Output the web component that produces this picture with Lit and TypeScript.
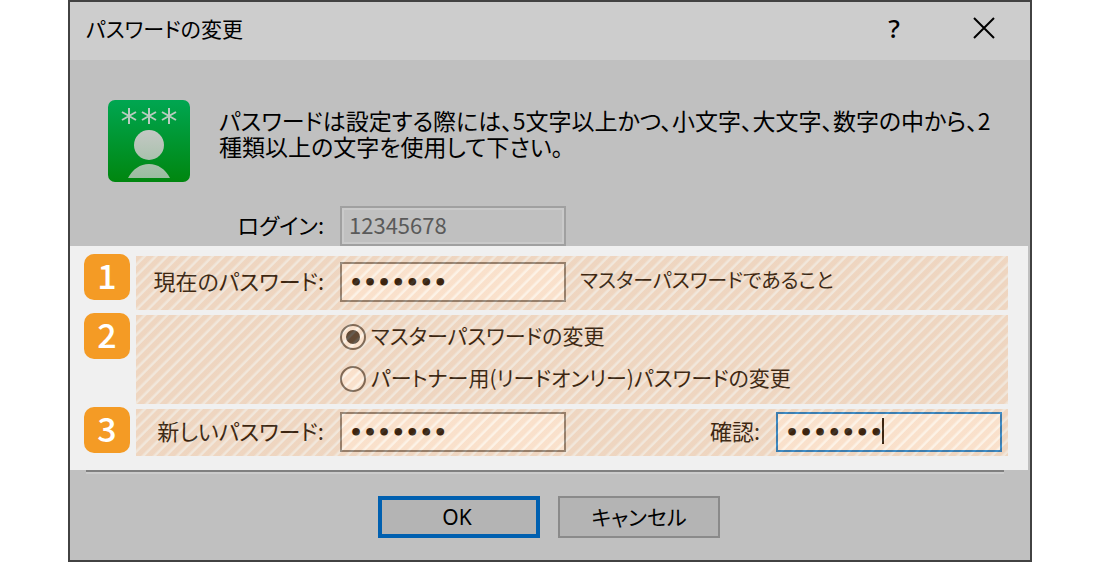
import { LitElement, html, css, svg } from "lit";
import { customElement, state } from "lit/decorators.js";

@customElement("password-icon")
class PasswordIcon extends LitElement {
  static styles = css`
    :host { display: block; flex: none; }
    svg { display: block; }
  `;
  render() {
    const star = (x: number) => svg`
      <path d="M${x} 8V24M${x - 7} 12L${x + 7} 20M${x + 7} 12L${x - 7} 20" />`;
    return html`
      <svg width="82" height="82" viewBox="0 0 82 82" aria-hidden="true">
        <defs>
          <linearGradient id="tile" x1="0" y1="0" x2="0" y2="1">
            <stop offset="0" stop-color="#00a651" />
            <stop offset="1" stop-color="#00860f" />
          </linearGradient>
          <linearGradient id="person" gradientUnits="userSpaceOnUse" x1="0" y1="30" x2="0" y2="78">
            <stop offset="0" stop-color="#c4c8c4" />
            <stop offset="1" stop-color="#9abda0" />
          </linearGradient>
        </defs>
        <rect width="82" height="82" rx="7" fill="url(#tile)" />
        <g stroke="#b8ccc0" stroke-width="2" fill="none">${star(21)}${star(41)}${star(61)}</g>
        <circle cx="41" cy="45" r="15" fill="url(#person)" />
        <path d="M20 78C25 69 32 64 41 64S57 69 62 78Z" fill="url(#person)" />
      </svg>`;
  }
}

@customElement("app-root")
class AppRoot extends LitElement {
  @state() private target = "master";

  static styles = css`
    :host {
      display: block;
      padding: 0 68px;
      background: #fff;
      color: #000;
      font-family: "Noto Sans CJK JP", sans-serif;
      font-size: 22px;
      font-weight: 400;
      line-height: 26px;
      font-feature-settings: "palt";
    }
    *, *::before, *::after { box-sizing: border-box; }
    .dialog { border: 2px solid #424242; background: #c0c0c0; }
    .titlebar {
      display: flex; align-items: center; height: 58px;
      padding: 0 16px 6px; background: #cdcdcd;
    }
    .title { flex: 1; margin: 0; font-size: 21px; font-weight: 400; }
    .tool {
      display: grid; place-items: center; width: 60px; height: 40px;
      padding: 0; border: 0; background: none; color: #000;
      font: 500 26px/26px "Noto Sans", sans-serif;
    }
    .tools { display: flex; gap: 30px; }
    .intro { display: flex; gap: 29px; padding: 40px 28px 0 38px; font-size: 23px; }
    .intro p { margin: 7px 0 0; }
    .field { display: flex; align-items: center; gap: 16px; }
    .label { flex: none; width: 188px; text-align: right; }
    .field label, .note, .choice span { padding-bottom: 4px; white-space: nowrap; }
    .login { padding: 24px 0 0 66px; }
    .box {
      flex: none; width: 226px; height: 40px; margin: 0; padding: 0 7px;
      border: 2px solid #a0a0a0; border-radius: 0; outline: none;
      background: #fff; color: #000; font: inherit;
    }
    .box:disabled {
      padding-bottom: 4px; background: #c0c0c0; color: #5a5a5a;
      box-shadow: inset 0 0 0 2px #cacaca;
    }
    .secret { border-color: #7a7a7a; font-family: "DejaVu Sans", sans-serif; font-size: 22px; font-weight: 700; }
    .active { border-color: #0078d7; }
    .steps {
      display: grid; gap: 5px; margin: 0 2px 0 0; padding: 10px 20px 14px 14px;
      list-style: none; background: #f0f0f0;
    }
    .step { display: flex; gap: 6px; }
    .badge {
      flex: none; display: grid; place-items: center; width: 46px; height: 46px;
      margin-top: -2px; padding-bottom: 4px; border-radius: 10px;
      background: #f49b25; color: #fff;
      font-size: 34px; line-height: 34px; font-weight: 500;
    }
    .panel { position: relative; flex: 1; }
    .panel::after {
      content: ""; position: absolute; inset: 0; pointer-events: none;
      background: repeating-linear-gradient(135deg,
        rgba(234, 138, 56, 0.26) 0 4px, rgba(244, 205, 160, 0.26) 6px 7px,
        rgba(234, 138, 56, 0.26) 8px);
    }
    .current { padding: 6px 6px 8px 0; }
    .choices { margin: 0; padding: 1px 0 4px 204px; border: 0; }
    .renew { display: flex; justify-content: space-between; padding: 3px 6px 4px 0; }
    .note { margin-left: -2px; font-size: 20px; }
    .choice { display: flex; align-items: center; gap: 5px; height: 42px; font-size: 21px; }
    .radio {
      appearance: none; display: grid; place-items: center; width: 26px; height: 26px;
      margin: 0; border: 2px solid #5c5c5c; border-radius: 50%; background: #fff;
    }
    .radio:checked::before {
      content: ""; width: 14px; height: 14px; border-radius: 50%; background: #333;
    }
    .entry { position: relative; display: flex; }
    .caret {
      position: absolute; left: 106px; top: 6px; width: 2px; height: 26px; background: #000;
    }
    .rule {
      height: 4px; margin: 0 26px 0 16px; border: 0;
      border-top: 2px solid #808080; border-bottom: 2px solid #cccccc;
    }
    .actions { display: flex; justify-content: center; gap: 18px; padding: 22px 2px 22px 0; }
    .button {
      width: 162px; height: 42px; padding: 0 4px 2px; border: 2px solid #8a8a8a;
      border-radius: 0; background: #b4b4b4; color: #000; font: inherit; font-size: 21px;
      font-feature-settings: inherit;
    }
    .default { padding: 0 8px 0 4px; border: 4px solid #0060b0; font-family: "Noto Sans", sans-serif; }
  `;

  private choice(value: string, text: string) {
    return html`
      <label class="choice">
        <input class="radio" type="radio" name="target" .value=${value}
          .checked=${this.target === value} @change=${() => (this.target = value)} />
        <span>${text}</span>
      </label>`;
  }

  render() {
    return html`
      <section class="dialog" role="dialog" aria-labelledby="title">
        <header class="titlebar">
          <h1 class="title" id="title">パスワードの変更</h1>
          <div class="tools">
            <button class="tool" type="button">?</button>
            <button class="tool" type="button" aria-label="閉じる">
              <svg width="22" height="22" viewBox="0 0 22 22">
                <path d="M1 1L21 21M21 1L1 21" stroke="#000" stroke-width="2" />
              </svg>
            </button>
          </div>
        </header>
        <form @submit=${(e: Event) => e.preventDefault()}>
          <div class="intro">
            <password-icon></password-icon>
            <p>パスワードは設定する際には、5文字以上かつ、小文字、大文字、数字の中から、2種類以上の文字を使用して下さい。</p>
          </div>
          <div class="field login">
            <label class="label" for="login">ログイン:</label>
            <input class="box" id="login" value="12345678" disabled />
          </div>
          <ol class="steps">
            <li class="step">
              <span class="badge">1</span>
              <div class="panel current field">
                <label class="label" for="current">現在のパスワード:</label>
                <input class="box secret" id="current" type="password" value="abcd123" />
                <span class="note">マスターパスワードであること</span>
              </div>
            </li>
            <li class="step">
              <span class="badge">2</span>
              <div class="panel choices" role="radiogroup">
                ${this.choice("master", "マスターパスワードの変更")}
                ${this.choice("partner", "パートナー用(リードオンリー)パスワードの変更")}
              </div>
            </li>
            <li class="step">
              <span class="badge">3</span>
              <div class="panel renew">
                <div class="field">
                  <label class="label" for="fresh">新しいパスワード:</label>
                  <input class="box secret" id="fresh" type="password" value="efgh456" />
                </div>
                <div class="field">
                  <label for="confirm">確認:</label>
                  <div class="entry">
                    <input class="box secret active" id="confirm" type="password" value="efgh456" />
                    <span class="caret"></span>
                  </div>
                </div>
              </div>
            </li>
          </ol>
          <hr class="rule" />
          <div class="actions">
            <button class="button default" type="submit">OK</button>
            <button class="button" type="button">キャンセル</button>
          </div>
        </form>
      </section>`;
  }
}
